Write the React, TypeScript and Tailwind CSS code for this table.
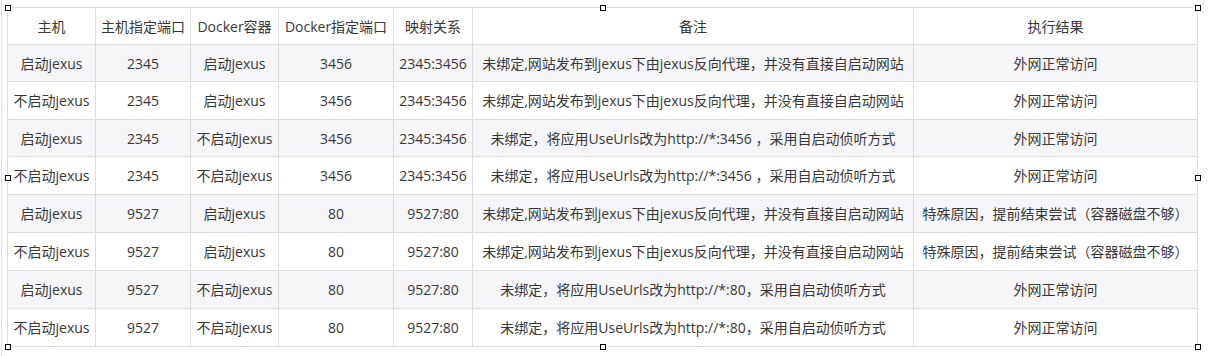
const HEAD = ["主机", "主机指定端口", "Docker容器", "Docker指定端口", "映射关系", "备注", "执行结果"];
const COLS = [88, 95, 88, 115, 79, 441, 284];

const NOTE_PROXY = "未绑定,网站发布到jexus下由jexus反向代理，并没有直接自启动网站";
const OK = "外网正常访问";
const FAIL = "特殊原因，提前结束尝试（容器磁盘不够）";

const ROWS: string[][] = [
  ["启动jexus", "2345", "启动jexus", "3456", "2345:3456", NOTE_PROXY, OK],
  ["不启动jexus", "2345", "启动jexus", "3456", "2345:3456", NOTE_PROXY, OK],
  ["启动jexus", "2345", "不启动jexus", "3456", "2345:3456", "未绑定，将应用UseUrls改为http://*:3456 ，采用自启动侦听方式", OK],
  ["不启动jexus", "2345", "不启动jexus", "3456", "2345:3456", "未绑定，将应用UseUrls改为http://*:3456 ，采用自启动侦听方式", OK],
  ["启动jexus", "9527", "启动jexus", "80", "9527:80", NOTE_PROXY, FAIL],
  ["不启动jexus", "9527", "启动jexus", "80", "9527:80", NOTE_PROXY, FAIL],
  ["启动jexus", "9527", "不启动jexus", "80", "9527:80", "未绑定，将应用UseUrls改为http://*:80，采用自启动侦听方式", OK],
  ["不启动jexus", "9527", "不启动jexus", "80", "9527:80", "未绑定，将应用UseUrls改为http://*:80，采用自启动侦听方式", OK],
];

// row heights between grid lines, measured off the screenshot
const ROW_H = [37, 38, 37, 38, 38, 38, 38, 38];

function Handle({ className }: { className: string }) {
  return <span className={`absolute h-[6px] w-[6px] border border-black bg-white ${className}`} />;
}

export default function App() {
  return (
    <div
      className="relative h-[356px] w-[1213px] overflow-hidden bg-white text-[14px] text-[#383838]"
      style={{ fontFamily: '"Open Sans", "Noto Sans CJK SC", sans-serif' }}
    >
      <div className="ml-[1px] h-full border-l border-[#dcdcdc] pl-[5px] pt-[7px]">
        <div className="relative w-[1191px]">
          <table className="w-[1191px] table-fixed border-collapse">
            <colgroup>
              {COLS.map((w, i) => (
                <col key={i} style={{ width: w }} />
              ))}
            </colgroup>
            <thead>
              <tr className="h-[37px] bg-white">
                {HEAD.map((h) => (
                  <th key={h} className="border border-[#dddddd] p-0 text-center font-normal whitespace-nowrap">
                    {h}
                  </th>
                ))}
              </tr>
            </thead>
            <tbody>
              {ROWS.map((r, i) => (
                <tr key={i} className={i % 2 === 0 ? "bg-[#f6f6f8]" : "bg-white"} style={{ height: ROW_H[i] }}>
                  {r.map((c, j) => (
                    <td key={j} className="border border-[#dddddd] p-0 text-center whitespace-nowrap">
                      {c}
                    </td>
                  ))}
                </tr>
              ))}
            </tbody>
          </table>

          {/* selection handles */}
          <Handle className="left-[-2px] top-[-2px]" />
          <Handle className="left-[593px] top-[-2px]" />
          <Handle className="right-[-3px] top-[-2px]" />
          <Handle className="left-[-2px] top-[168px]" />
          <Handle className="right-[-3px] top-[168px]" />
          <Handle className="left-[-2px] bottom-[-3px]" />
          <Handle className="left-[593px] bottom-[-3px]" />
          <Handle className="right-[-3px] bottom-[-3px]" />
        </div>
      </div>
      <span className="absolute left-[1203px] top-0 h-[8px] w-px bg-[#e2e2e2]" />
    </div>
  );
}
